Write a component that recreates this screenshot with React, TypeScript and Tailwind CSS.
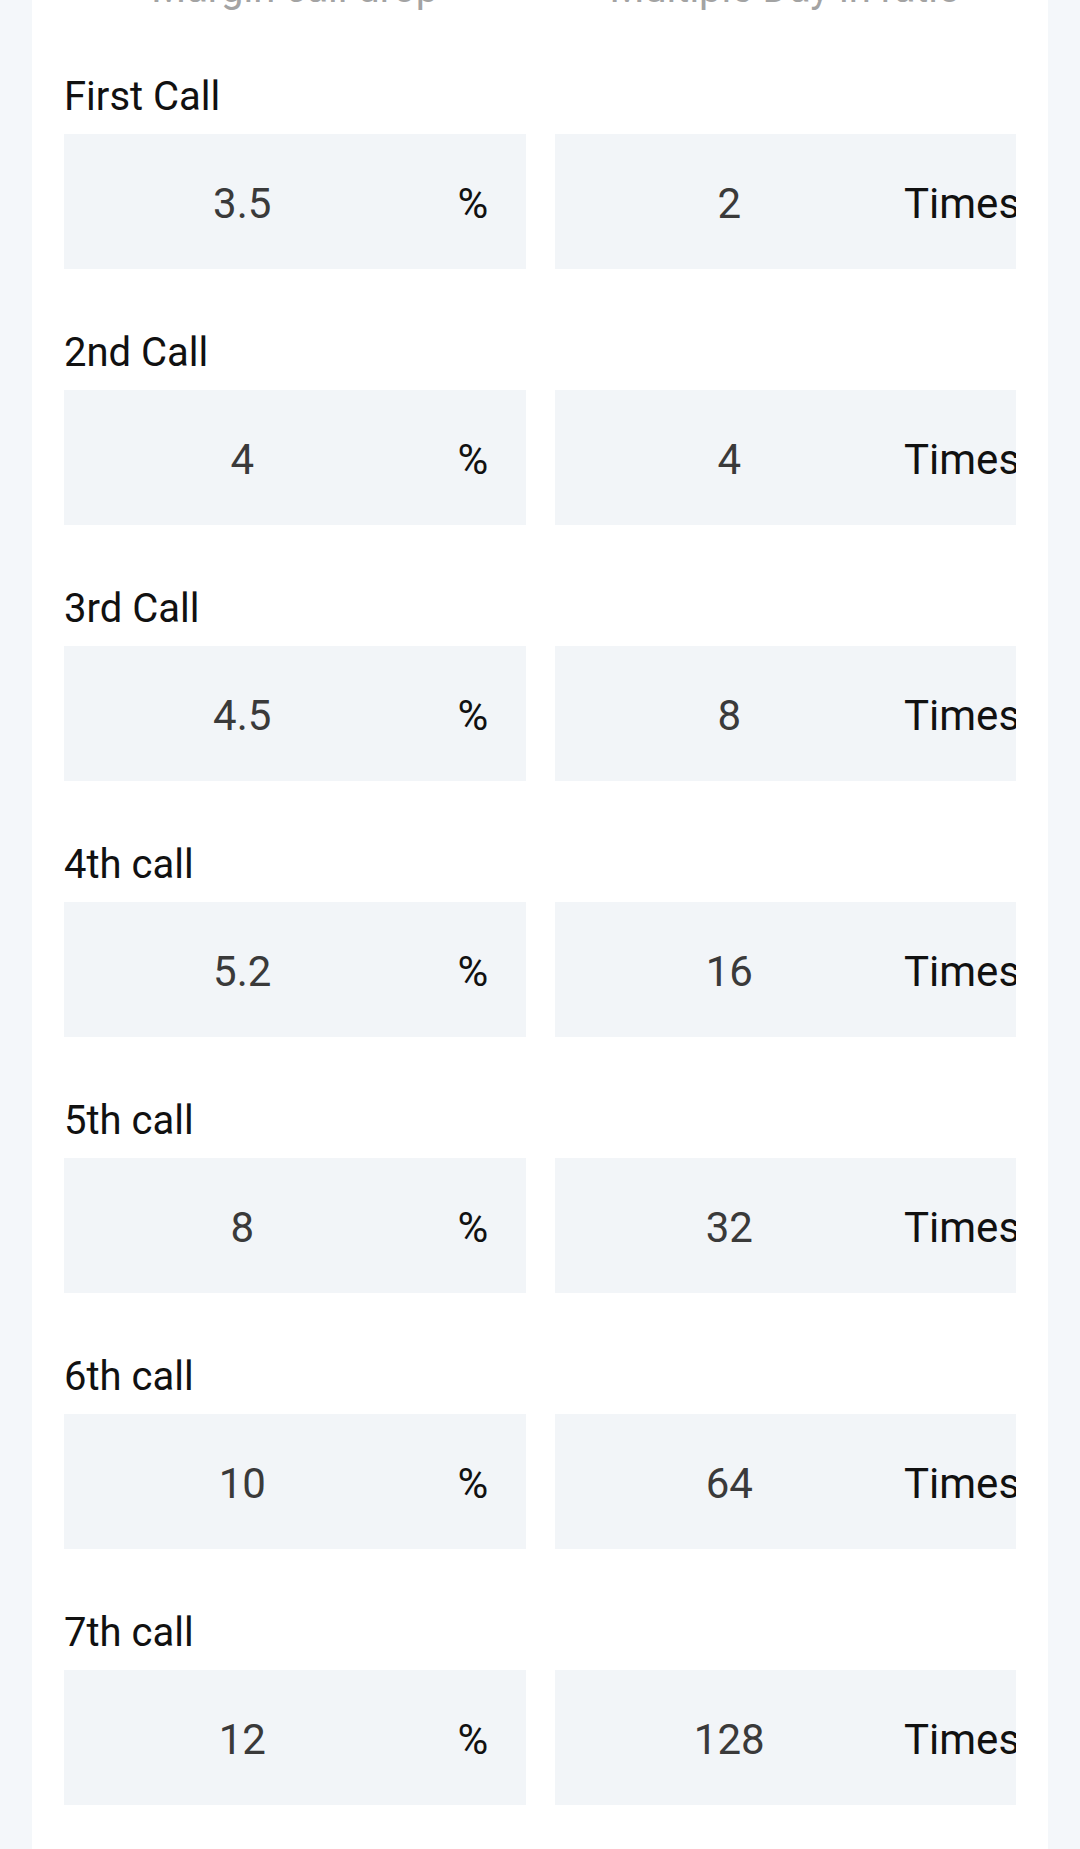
import React from "react";

const rows = [
  { label: "First Call", pct: "3.5", times: "2" },
  { label: "2nd Call", pct: "4", times: "4" },
  { label: "3rd Call", pct: "4.5", times: "8" },
  { label: "4th call", pct: "5.2", times: "16" },
  { label: "5th call", pct: "8", times: "32" },
  { label: "6th call", pct: "10", times: "64" },
  { label: "7th call", pct: "12", times: "128" },
];

export default function App() {
  return (
    <div
      className="w-[1080px] h-[1849px] overflow-hidden bg-[#f4f7fa] px-[32px]"
      style={{ fontFamily: "Roboto, 'Noto Sans', sans-serif" }}
    >
      <div className="flex h-full flex-col bg-white px-[32px]">
        <div className="-mt-[35px] grid grid-cols-2 gap-[29px] text-[40px] leading-[47px] text-[#a3a3a3] text-center">
          <div>Margin call drop</div>
          <div>Multiple Day in ratio</div>
        </div>
        <div className="mt-[61px] flex flex-col gap-[60px]">
          {rows.map((r) => (
            <div key={r.label} className="flex flex-col">
              <div className="text-[40px] leading-[47px] text-[#111111]">{r.label}</div>
              <div className="mt-[14px] grid grid-cols-2 gap-[29px]">
                <div className="flex h-[135px] items-center bg-[#f2f5f8] pt-[5px] overflow-hidden">
                  <div className="flex-1 text-center text-[42px] leading-[50px] text-[#3a3a3a]">{r.pct}</div>
                  <div className="w-[105px] shrink-0 text-center text-[42px] leading-[50px] text-[#111111]">%</div>
                </div>
                <div className="flex h-[135px] items-center bg-[#f2f5f8] pt-[5px] overflow-hidden">
                  <div className="flex-1 text-center text-[42px] leading-[50px] text-[#3a3a3a]">{r.times}</div>
                  <div className="w-[112px] shrink-0 whitespace-nowrap text-center text-[42px] leading-[50px] text-[#111111]">Times</div>
                </div>
              </div>
            </div>
          ))}
        </div>
      </div>
    </div>
  );
}
